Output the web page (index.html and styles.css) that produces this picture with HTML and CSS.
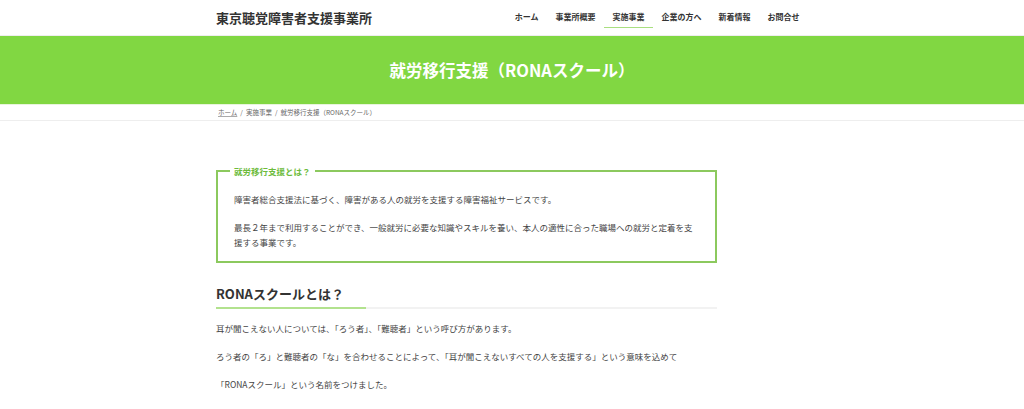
FILE: index.html
```html
<!DOCTYPE html>
<html lang="ja">
<head>
  <meta charset="UTF-8">
  <meta name="viewport" content="width=device-width, initial-scale=1.0">
  <title>就労移行支援（RONAスクール） | 東京聴覚障害者支援事業所</title>
  <link rel="stylesheet" href="styles.css">
</head>
<body>
  <header class="site-header">
    <div class="container header-inner">
      <a class="logo" href="#">東京聴覚障害者支援事業所</a>
      <nav class="gnav">
        <a href="#">ホーム</a>
        <a href="#">事業所概要</a>
        <a href="#" class="current">実施事業</a>
        <a href="#">企業の方へ</a>
        <a href="#">新着情報</a>
        <a href="#">お問合せ</a>
      </nav>
    </div>
  </header>

  <div class="page-header">
    <h1>就労移行支援（RONAスクール）</h1>
  </div>

  <div class="breadcrumb">
    <div class="container">
      <a href="#">ホーム</a><span class="sep">/</span><span>実施事業</span><span class="sep">/</span><span>就労移行支援（RONAスクール）</span>
    </div>
  </div>

  <main class="container">
    <div class="main-col">
      <div class="border-box">
        <div class="border-box-title">就労移行支援とは？</div>
        <p>障害者総合支援法に基づく、障害がある人の就労を支援する障害福祉サービスです。</p>
        <p>最長２年まで利用することができ、一般就労に必要な知識やスキルを養い、本人の適性に合った職場への就労と定着を支援する事業です。</p>
      </div>

      <h2>RONAスクールとは？</h2>
      <p>耳が聞こえない人については、「ろう者」、「難聴者」という呼び方があります。</p>
      <p>ろう者の「ろ」と難聴者の「な」を合わせることによって、「耳が聞こえないすべての人を支援する」という意味を込めて</p>
      <p>「RONAスクール」という名前をつけました。</p>
    </div>
  </main>
</body>
</html>
```

FILE: styles.css
```css
body {
  margin: 0;
  font-family: "Noto Sans CJK JP", "Noto Sans", sans-serif;
  background-color: #fff;
  color: #444;
}
a {
  color: inherit;
  text-decoration: none;
}
.container {
  width: 592px;
  margin: 0 auto;
}
.site-header {
  height: 35px;
  border-bottom: 1px solid #eee;
}
.header-inner {
  display: flex;
  align-items: center;
  justify-content: space-between;
  height: 35px;
}
.logo {
  font-size: 13px;
  font-weight: bold;
  color: #333;
  margin-top: -1px;
}
.gnav {
  display: flex;
  height: 35px;
}
.gnav a {
  display: flex;
  align-items: center;
  padding: 0 8.5px;
  font-size: 8px;
  font-weight: bold;
  color: #333;
  position: relative;
  margin-top: -2px;
}
.gnav a.current::after {
  content: "";
  position: absolute;
  left: 0;
  right: 0;
  top: 29px;
  height: 1px;
  background-color: #a9df80;
}
.page-header {
  background-color: #81d742;
  height: 68px;
  display: flex;
  align-items: center;
  justify-content: center;
}
.page-header h1 {
  margin: 0;
  color: #fff;
  font-size: 16.5px;
  font-weight: bold;
}
.breadcrumb {
  border-top: 1px solid #e8f5dc;
  border-bottom: 1px solid #eee;
  height: 15px;
  line-height: 15px;
  font-size: 6.5px;
  color: #666;
}
.breadcrumb .container {
  padding-left: 2px;
  box-sizing: border-box;
}
.breadcrumb a {
  text-decoration: underline;
  text-decoration-color: #aaa;
}
.breadcrumb .sep {
  margin: 0 3px;
}
.main-col {
  width: 501px;
  padding-top: 49px;
}
.main-col p {
  margin: 0 0 13px;
  font-size: 8.5px;
  line-height: 15px;
}
.border-box {
  position: relative;
  border: 2px solid #8cc95e;
  padding: 20px 16px 11px;
}
.border-box p:last-child {
  margin-bottom: 0;
}
.border-box-title {
  position: absolute;
  top: -8px;
  left: 12px;
  padding: 0 4px;
  background-color: #fff;
  color: #6dbb3c;
  font-size: 8.5px;
  line-height: 14px;
  font-weight: bold;
}
.main-col h2 {
  position: relative;
  margin: 21px 0 12px;
  padding-bottom: 4px;
  font-size: 13px;
  line-height: 19px;
  font-weight: bold;
  color: #333;
  border-bottom: 2px solid #f2f2f2;
}
.main-col h2::after {
  content: "";
  position: absolute;
  left: 0;
  bottom: -2px;
  width: 150px;
  height: 2px;
  background-color: #b2e28e;
}
```
